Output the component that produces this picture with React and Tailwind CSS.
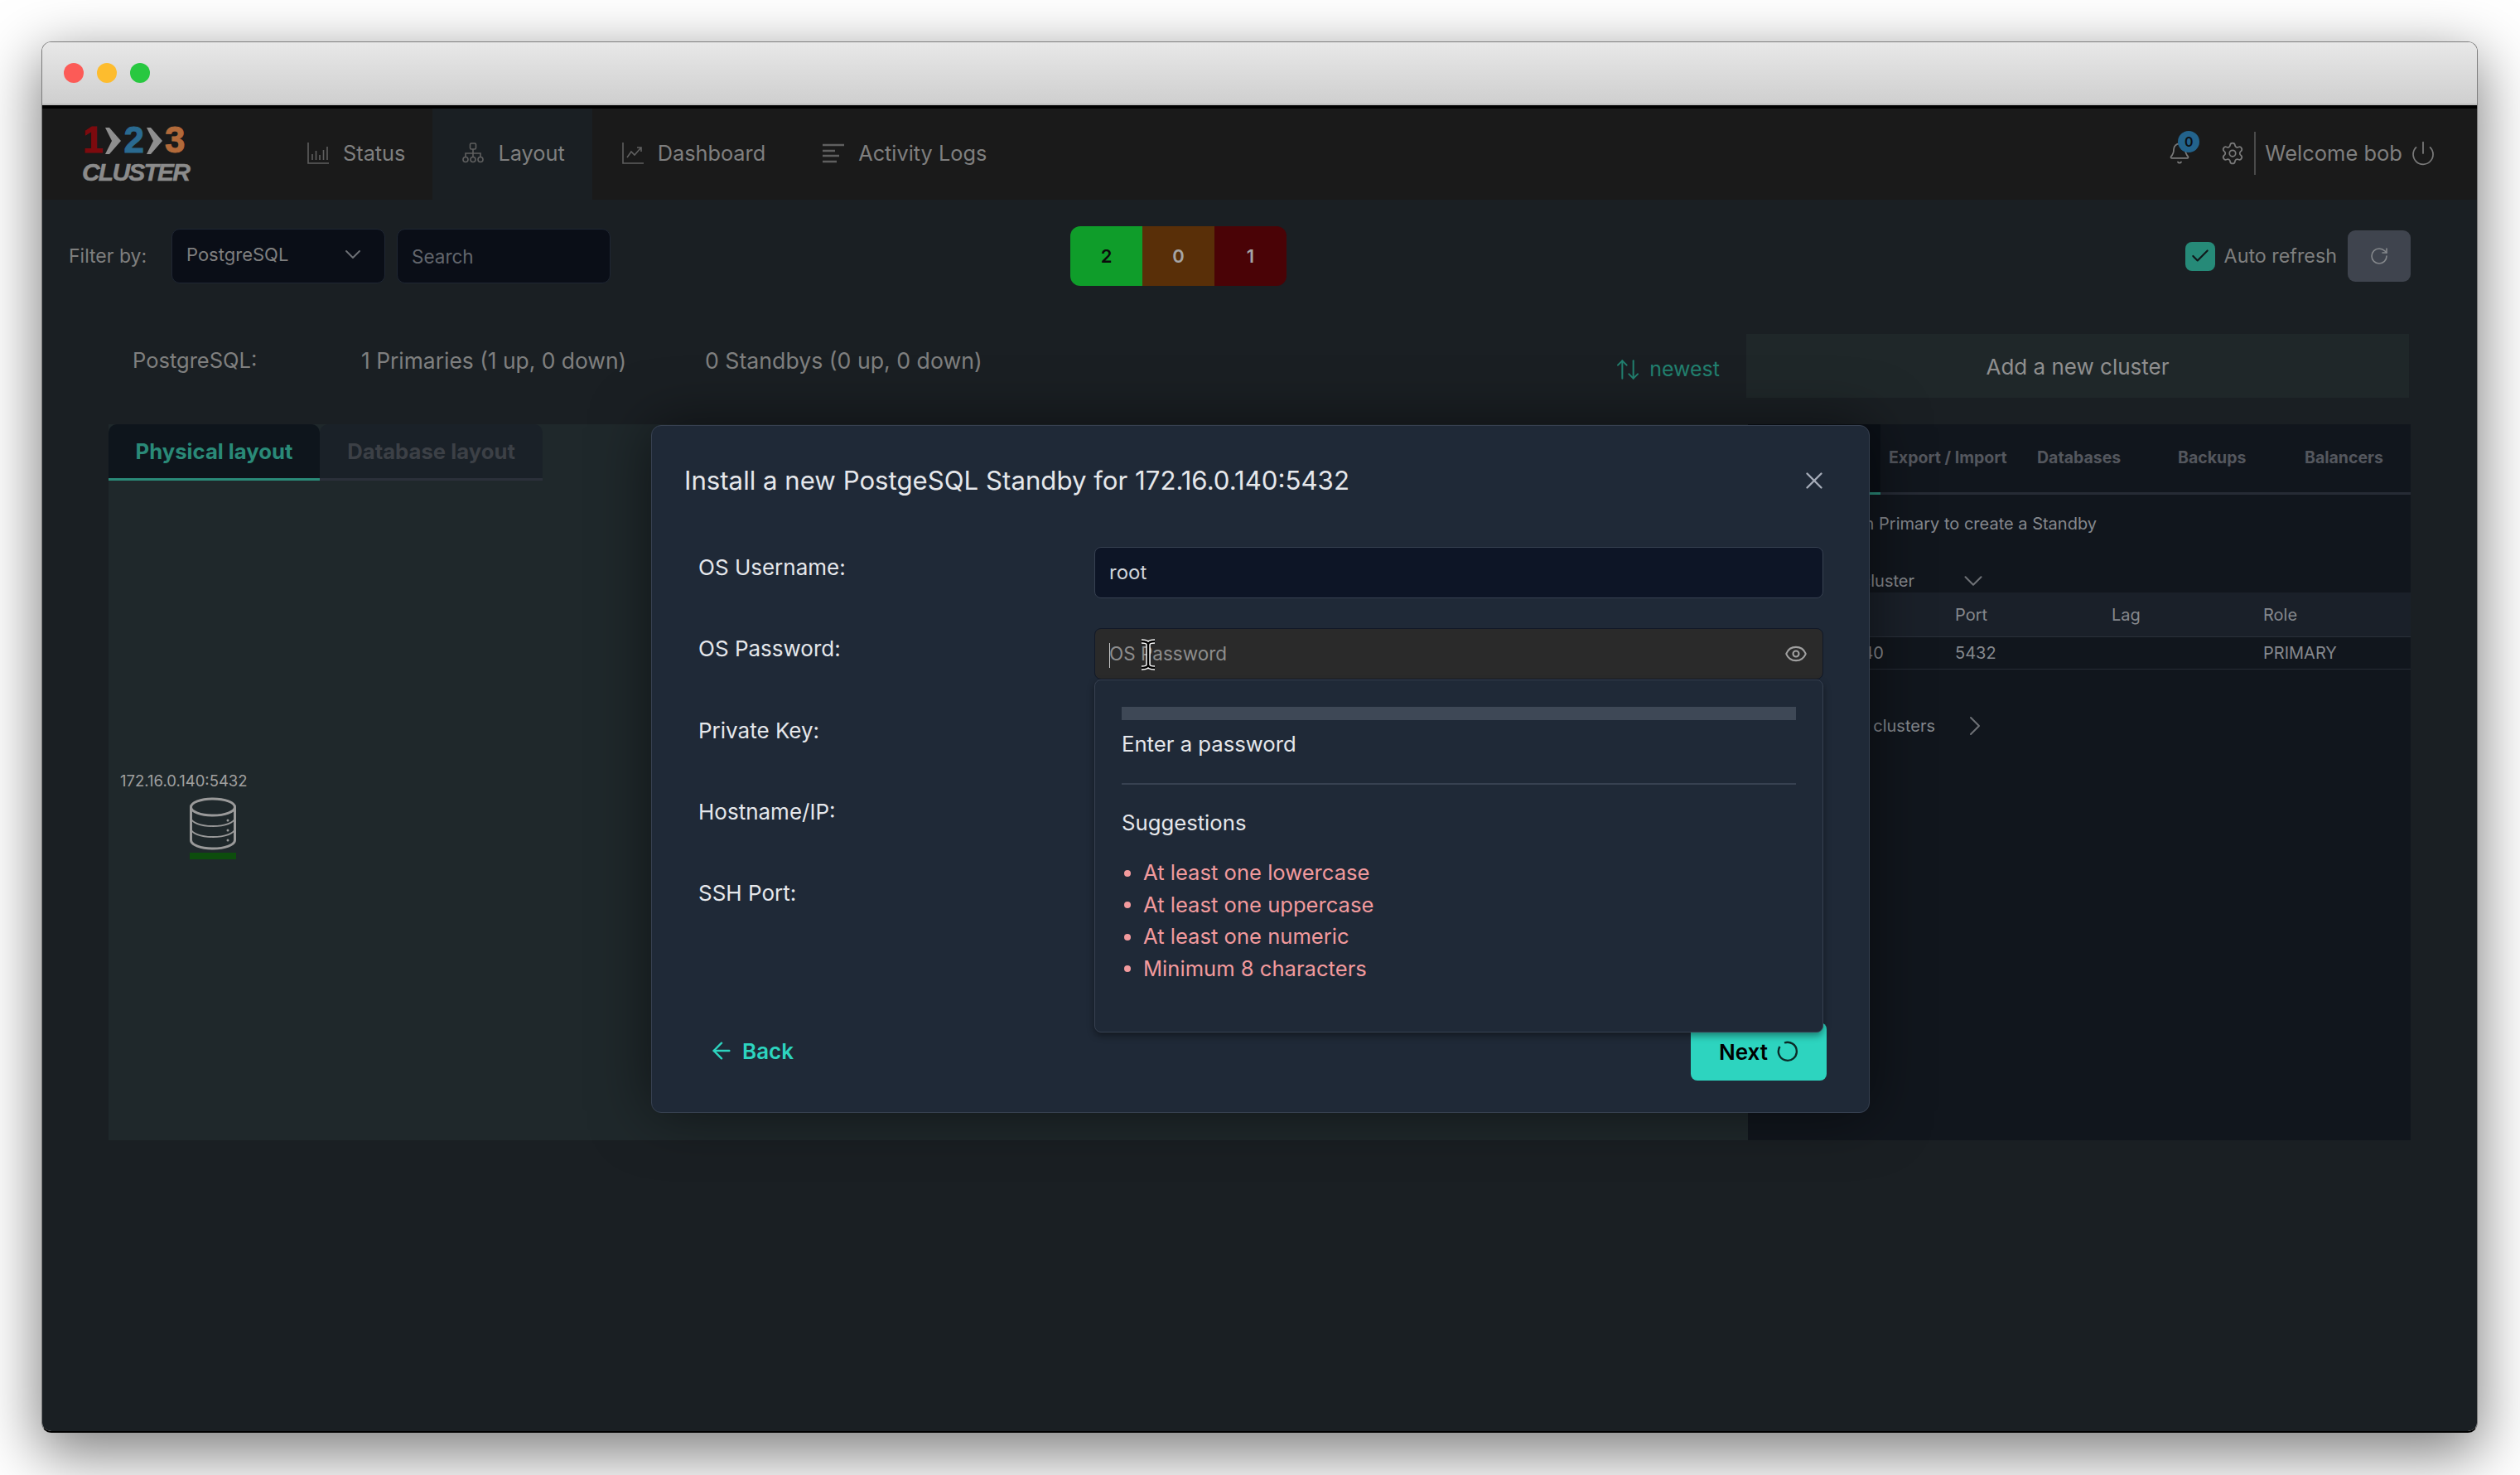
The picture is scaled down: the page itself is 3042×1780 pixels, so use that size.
// App.jsx
import React from "react";
import { ArrowLeft, ArrowUpDown, Bell, Check, ChevronDown, ChevronRight, Eye, Power, RotateCw, Settings, X } from "lucide-react";

const NAV = [
  { label: "Status", icon: StatusIcon },
  { label: "Layout", icon: LayoutIcon, active: true },
  { label: "Dashboard", icon: DashIcon },
  { label: "Activity Logs", icon: LogsIcon },
];

const RULES = ["At least one lowercase", "At least one uppercase", "At least one numeric", "Minimum 8 characters"];

function StatusIcon() {
  return (
    <svg width="26" height="26" viewBox="0 0 26 26" fill="none" stroke="#5f5f5f" strokeWidth="1.6">
      <path d="M1 0v25h25" />
      <path d="M6 21v-7M10.500 21v-11M15 21v-6M19.500 21v-12M24 21V5" />
    </svg>
  );
}

function LayoutIcon() {
  return (
    <svg width="26" height="26" viewBox="0 0 26 26" fill="none" stroke="#5f5f5f" strokeWidth="1.6">
      <rect x="9.500" y="1" width="7" height="7" rx="1.500" />
      <path d="M13 8v9M4 17v-4h18v4" />
      <circle cx="4" cy="20.500" r="3" />
      <circle cx="13" cy="20.500" r="3" />
      <circle cx="22" cy="20.500" r="3" />
    </svg>
  );
}

function DashIcon() {
  return (
    <svg width="26" height="26" viewBox="0 0 26 26" fill="none" stroke="#5f5f5f" strokeWidth="1.6">
      <path d="M1 0v25h25" />
      <path d="M6 18l5-7 4 4 8-9M18 6h5v5" />
    </svg>
  );
}

function LogsIcon() {
  return (
    <svg width="26" height="26" viewBox="0 0 26 26" fill="none" stroke="#5f5f5f" strokeWidth="2.600">
      <path d="M0 3h26M0 10h15M0 16h20M0 23h17" />
    </svg>
  );
}

function DbIcon() {
  return (
    <svg width="56" height="64" viewBox="0 0 56 64" fill="none" stroke="#9a9a9a" strokeWidth="2.500">
      <ellipse cx="28" cy="12" rx="26.500" ry="10" strokeWidth="3" />
      <path d="M1.500 12v40c0 5.500 12 10 26.500 10s26.500-4.500 26.500-10V12" strokeWidth="3" />
      <path d="M1.500 25c0 5.500 12 10 26.500 10s26.500-4.500 26.500-10M1.500 38c0 5.500 12 10 26.500 10s26.500-4.500 26.500-10" strokeWidth="1.800" />
      <circle cx="46" cy="28" r="1.500" fill="#9a9a9a" stroke="none" />
      <circle cx="46" cy="40" r="1.500" fill="#9a9a9a" stroke="none" />
      <circle cx="46" cy="52" r="1.500" fill="#9a9a9a" stroke="none" />
    </svg>
  );
}

function Logo() {
  const digit = "font-['Liberation_Sans',sans-serif] text-[44px] font-bold leading-[44px] [-webkit-text-stroke:1px_currentColor]";
  const chevron = (
    <svg width="19" height="32" viewBox="0 0 19 32" className="mt-[1px]">
      <polygon points="5,0 19,16 5,32 0,32 8,16 0,0" fill="#8f8f8f" />
    </svg>
  );
  return (
    <div className="flex flex-col pt-[16px] pl-[48px]">
      <div className="flex items-center gap-[3px] pl-[1px]">
        <span className={`${digit} text-[#7d0a0e]`}>1</span>
        {chevron}
        <span className={`${digit} text-[#2a6a90]`}>2</span>
        {chevron}
        <span className={`${digit} text-[#b26a3a]`}>3</span>
      </div>
      <div className="mt-[1px] font-['Liberation_Sans',sans-serif] text-[30px] leading-[32px] font-bold italic tracking-[-1.800px] text-[#8b8b8b] [-webkit-text-stroke:0.5px_currentColor]">
        CLUSTER
      </div>
    </div>
  );
}

function Navbar() {
  return (
    <div className="flex h-[110px] shrink-0 items-stretch bg-[#1a1a1a]">
      <div className="w-[284px]">
        <Logo />
      </div>
      {NAV.map((item) => (
        <div
          key={item.label}
          className={`flex items-center gap-[17px] pr-[33px] pl-[36px] pb-[2px] ${item.active ? "bg-[#1a1f23]" : ""}`}
        >
          <item.icon />
          <span className="text-[25.300px] text-[#7f7f7f]">{item.label}</span>
        </div>
      ))}
      <div className="ml-auto flex items-center pr-[49px] pb-[2px]">
        <div className="relative mr-[35px] h-[28px] w-[28px]">
          <Bell size={28} strokeWidth={1.500} className="text-[#7a7a7a]" />
          <span className="absolute -top-[13px] left-[12px] flex h-[26px] w-[26px] items-center justify-center rounded-full bg-[#23638c] text-[16px] font-semibold text-[#0c0f12]">
            0
          </span>
        </div>
        <Settings size={30} strokeWidth={1.400} className="text-[#7a7a7a]" />
        <div className="mx-[11px] h-[52px] w-[2px] bg-[#4a4a4a]" />
        <span className="text-[25.500px] text-[#7f7f7f]">Welcome bob</span>
        <Power size={32} strokeWidth={1.300} className="ml-[9px] text-[#7a7a7a]" />
      </div>
    </div>
  );
}

function FilterRow() {
  return (
    <div className="flex items-center pt-[32px] pr-[80px] pl-[32px]">
      <span className="w-[124px] text-[23px] text-[#7f7f7f]">Filter by:</span>
      <div className="flex h-[66px] w-[258px] items-center justify-between rounded-[10px] border border-[#1f2633] bg-[#0a0e17] pr-[22px] pl-[17px] pb-[4px]">
        <span className="text-[22px] text-[#7f7f7f]">PostgreSQL</span>
        <ChevronDown size={32} strokeWidth={1.400} className="text-[#6e7176]" />
      </div>
      <div className="ml-[14px] flex h-[66px] w-[258px] items-center rounded-[10px] border border-[#1f2633] bg-[#0a0e17] pt-[2px] pl-[17px]">
        <span className="text-[22.500px] text-[#62666d]">Search</span>
      </div>
      <div className="ml-[555px] flex h-[72px] w-[261px] overflow-hidden rounded-[12px] text-[22px] font-semibold">
        <div className="flex flex-1 items-center justify-center bg-[#0f9d2a] text-[#0b0b0b]">2</div>
        <div className="flex flex-1 items-center justify-center bg-[#592f08] text-[#a5a5a5]">0</div>
        <div className="flex flex-1 items-center justify-center bg-[#4a0306] text-[#a5a5a5]">1</div>
      </div>
      <div className="ml-auto flex items-center">
        <div className="flex h-[35px] w-[36px] items-center justify-center rounded-[8px] bg-[#268a78]">
          <Check size={26} strokeWidth={2} className="text-[#10181a]" />
        </div>
        <span className="ml-[11px] text-[23.300px] text-[#7f7f7f]">Auto refresh</span>
        <div className="ml-[13px] flex h-[62px] w-[76px] items-center justify-center rounded-[9px] bg-[#3f444e]">
          <RotateCw size={24} strokeWidth={1.600} className="text-[#85888c]" />
        </div>
      </div>
    </div>
  );
}

function StatsRow() {
  return (
    <div className="mt-[58px] flex h-[77px] items-center pr-[82px] pl-[109px]">
      <span className="w-[276px] pb-[12px] text-[25.500px] text-[#7f7f7f]">PostgreSQL:</span>
      <span className="w-[415px] pb-[12px] text-[26.400px] text-[#7f7f7f]">1 Primaries (1 up, 0 down)</span>
      <span className="pb-[12px] text-[26.700px] text-[#7f7f7f]">0 Standbys (0 up, 0 down)</span>
      <div className="ml-auto flex items-center gap-[10px] pt-[8px] text-[#22806f]">
        <ArrowUpDown size={32} strokeWidth={1.500} />
        <span className="text-[25px]">newest</span>
      </div>
      <div className="ml-[32px] flex h-[77px] w-[800px] items-center justify-center bg-[#1f2729] pt-[2px] text-[26px] text-[#8f8f8f]">
        Add a new cluster
      </div>
    </div>
  );
}

function LeftPanel() {
  return (
    <div className="flex flex-1 flex-col bg-[#1f282b]">
      <div className="flex h-[68px] text-[25.700px] font-bold">
        <div className="flex w-[255px] items-center justify-center rounded-t-[10px] border-b-[3px] border-[#2a8a78] bg-[#0e151c] pt-[2px] text-[#2a8a78]">
          Physical layout
        </div>
        <div className="flex w-[269px] items-center justify-center rounded-t-[10px] border-b-[3px] border-[#2b303a] bg-[#1a2128] pt-[2px] text-[#3c4046]">
          Database layout
        </div>
      </div>
      <div className="mt-[350px] flex w-[338px] flex-col items-start pl-[14px]">
        <span className="text-[18.500px] leading-[24px] text-[#a0a0a0]">172.16.0.140:5432</span>
        <div className="mt-[8px] ml-[84px] flex flex-col">
          <DbIcon />
          <div className="mt-[3px] h-[8px] w-[56px] bg-[#0d4d0d]" />
        </div>
      </div>
    </div>
  );
}

function RightPanel() {
  return (
    <div className="flex w-[800px] flex-col bg-[#11161d] text-[20px] text-[#85888d]">
      <div className="flex h-[85px] items-center border-b-[3px] border-[#262b35] text-[19.500px] font-bold text-[#54575e]">
        <div className="relative -mb-[3px] h-[85px] w-[160px] border-b-[3px] border-[#2a8a78] bg-[#0b1017]" />
        <span className="ml-[10px] w-[179px]">Export / Import</span>
        <span className="w-[170px]">Databases</span>
        <span className="w-[153px]">Backups</span>
        <span>Balancers</span>
      </div>
      <div className="mt-[20px] flex h-[30px] w-[421px] items-center justify-end whitespace-nowrap">
        Right click on Primary to create a Standby
      </div>
      <div className="mt-[40px] flex h-[28px] items-center">
        <div className="flex w-[201px] justify-end">This cluster</div>
        <ChevronDown size={38} strokeWidth={1.300} className="ml-[52px] text-[#6e7176]" />
      </div>
      <div className="grid h-[54px] grid-cols-[250px_189px_183px_1fr] items-center border-b border-[#2a303a] bg-[#1a2029]">
        <span />
        <span>Port</span>
        <span>Lag</span>
        <span>Role</span>
      </div>
      <div className="grid h-[39px] grid-cols-[250px_189px_183px_1fr] items-center border-b border-[#262b35]">
        <span className="pr-[86px] text-right">172.16.0.140</span>
        <span>5432</span>
        <span />
        <span>PRIMARY</span>
      </div>
      <div className="mt-[54px] flex h-[28px] items-center">
        <div className="flex w-[226px] justify-end">Other clusters</div>
        <ChevronRight size={40} strokeWidth={1.200} className="ml-[28px] text-[#6e7176]" />
      </div>
    </div>
  );
}

function Field({ label, children }) {
  return (
    <div className="flex h-[98.300px] items-start">
      <div className="w-[534px] pl-[56px] text-[26px] leading-[49px] text-[#e5e7eb]">{label}</div>
      <div className="relative w-[880px]">{children}</div>
    </div>
  );
}

function PasswordPopover() {
  return (
    <div className="absolute top-[62px] left-0 z-10 h-[426px] w-[880px] rounded-[8px] border border-[#374151] bg-[#1f2937] px-[32px] pt-[32px] shadow-[0_4px_8px_rgba(0,0,0,0.4)]">
      <div className="h-[16px] bg-[#3e4856]" />
      <div className="mt-[13px] text-[25.700px] leading-[32px] text-[#e5e7eb]">Enter a password</div>
      <div className="mt-[31px] h-[2px] bg-[#374151]" />
      <div className="mt-[30px] text-[25.700px] leading-[32px] text-[#e5e7eb]">Suggestions</div>
      <ul className="mt-[25px]">
        {RULES.map((rule) => (
          <li key={rule} className="flex h-[38.500px] items-center text-[25.600px] text-[#f29a9d]">
            <span className="mr-[15px] ml-[3px] h-[8px] w-[8px] rounded-full bg-[#f29a9d]" />
            {rule}
          </li>
        ))}
      </ul>
    </div>
  );
}

function IBeam() {
  return (
    <svg width="22" height="38" viewBox="0 0 22 38" fill="none" className="absolute top-[12px] left-[53px]">
      <path d="M3 3c5 0 8 1 8 4v24c0 3-3 4-8 4M19 3c-5 0-8 1-8 4v24c0 3 3 4 8 4" stroke="#fff" strokeWidth="5.500" />
      <path d="M3 3c5 0 8 1 8 4v24c0 3-3 4-8 4M19 3c-5 0-8 1-8 4v24c0 3 3 4 8 4" stroke="#000" strokeWidth="2.600" />
    </svg>
  );
}

function Dialog() {
  return (
    <div className="absolute top-[272px] left-[735px] z-20 flex h-[830px] w-[1471px] flex-col rounded-[12px] border border-[#374151] bg-[#1f2937] shadow-[0_0_70px_rgba(0,0,0,0.5)]">
      <div className="flex h-[132px] items-center justify-between pr-[49px] pl-[39px]">
        <span className="text-[31.200px] text-[#e5e7eb]">Install a new PostgeSQL Standby for 172.16.0.140:5432</span>
        <X size={34} strokeWidth={1.700} className="text-[#a5acb8]" />
      </div>
      <div className="mt-[14px]">
        <Field label="OS Username:">
          <div className="flex h-[62px] items-center rounded-[8px] border border-[#374151] bg-[#0d1526] pl-[17px] text-[24px] text-[#d1d5db]">
            root
          </div>
        </Field>
        <Field label="OS Password:">
          <div className="relative flex h-[62px] items-center justify-between rounded-[8px] border border-[#111827] bg-[#2a2a2a] pr-[18px] pl-[17px] text-[22.500px] text-[#8d8d8d]">
            <span className="absolute top-[17px] left-[17px] h-[30px] w-[1px] bg-[#c8c8c8]" />
            <span>OS Password</span>
            <Eye size={28} strokeWidth={1.800} className="text-[#a0a0a0]" />
            <IBeam />
          </div>
          <PasswordPopover />
        </Field>
        <Field label="Private Key:" />
        <Field label="Hostname/IP:" />
        <Field label="SSH Port:" />
      </div>
      <div className="mt-[83px] flex items-center justify-between pr-[51px] pl-[68px]">
        <div className="flex items-center gap-[9px] pb-[2px] text-[#2dd4bf]">
          <ArrowLeft size={32} strokeWidth={1.800} />
          <span className="text-[26px] font-semibold">Back</span>
        </div>
        <div className="flex h-[70px] w-[164px] items-center justify-center gap-[11px] rounded-[8px] bg-[#2dd4bf] text-black">
          <span className="text-[26px] font-semibold">Next</span>
          <svg width="26" height="26" viewBox="0 0 26 26" fill="none" stroke="#0b2b28" strokeWidth="2.400">
            <path d="M9 2.500A11 11 0 1 1 3.500 7" />
          </svg>
        </div>
      </div>
    </div>
  );
}

export default function App() {
  return (
    <div className="h-[1780px] w-[3042px] overflow-hidden bg-white pt-[50px] pl-[50px] font-['Inter',sans-serif]">
      <div className="flex h-[1679px] w-[2941px] flex-col overflow-hidden rounded-[12px] border border-[#7d7d7d] border-b-2 border-b-black shadow-[0_22px_70px_4px_rgba(0,0,0,0.5)]">
        <div className="flex h-[76px] shrink-0 items-center gap-[16px] border-b-[2px] border-[#bdbdbd] bg-gradient-to-b from-[#e8e8e8] to-[#cfcfcf] pl-[26px]">
          <span className="h-[24px] w-[24px] rounded-full bg-[#fc5b57]" />
          <span className="h-[24px] w-[24px] rounded-full bg-[#fdbc2e]" />
          <span className="h-[24px] w-[24px] rounded-full bg-[#28c840]" />
        </div>
        <div className="h-[4px] shrink-0 bg-black" />
        <Navbar />
        <div className="relative flex flex-1 flex-col bg-[#1a1f23]">
          <FilterRow />
          <StatsRow />
          <div className="mt-[32px] flex h-[864px] pr-[80px] pl-[80px]">
            <LeftPanel />
            <RightPanel />
          </div>
          <Dialog />
        </div>
      </div>
    </div>
  );
}
